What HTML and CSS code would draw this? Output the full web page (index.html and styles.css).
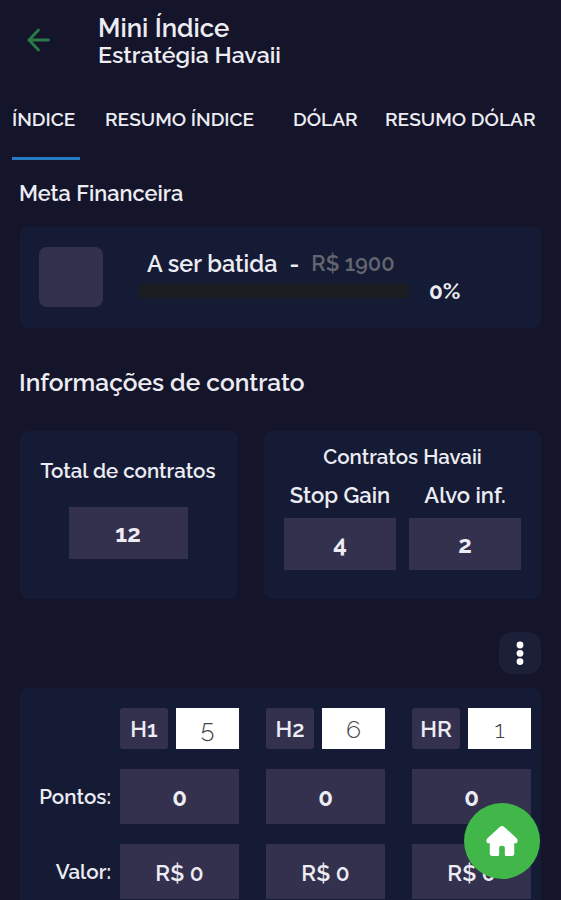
FILE: index.html
```html
<!DOCTYPE html>
<html lang="pt-BR">
<head>
<meta charset="utf-8">
<meta name="viewport" content="width=device-width, initial-scale=1">
<title>Mini Índice</title>
<link rel="stylesheet" href="styles.css">
</head>
<body>
<header class="header">
  <svg class="back" viewBox="0 0 24 24"><path d="M21.500 12H2.500M11.500 2L2 12L11.500 22"/></svg>
  <div>
    <h1 class="title">Mini Índice</h1>
    <p class="subtitle">Estratégia Havaii</p>
  </div>
</header>
<nav class="tabs">
  <a class="tab tab-active">ÍNDICE</a>
  <a class="tab">RESUMO ÍNDICE</a>
  <a class="tab">DÓLAR</a>
  <a class="tab">RESUMO DÓLAR</a>
</nav>
<main class="main">
  <h2 class="heading-goal">Meta Financeira</h2>
  <section class="card goal">
    <div class="swatch"></div>
    <div class="progress">
      <div class="goal-label"><span>A ser batida</span><span>-</span><span class="goal-value">R$ 1900</span></div>
      <div class="bar"></div>
    </div>
    <div class="percent">0%</div>
  </section>
  <h2 class="heading-info">Informações de contrato</h2>
  <div class="contracts">
    <section class="card total">
      <h3 class="label">Total de contratos</h3>
      <div class="box box-total">12</div>
    </section>
    <section class="card havaii">
      <h3 class="label">Contratos Havaii</h3>
      <div class="pair">
        <div><h4 class="label label-field">Stop Gain</h4><div class="box">4</div></div>
        <div><h4 class="label label-field">Alvo inf.</h4><div class="box">2</div></div>
      </div>
    </section>
  </div>
  <div class="toolbar">
    <button class="more" aria-label="Mais opções"><svg viewBox="0 0 8 26"><circle cx="4" cy="4" r="3.4"/><circle cx="4" cy="12.3" r="3.4"/><circle cx="4" cy="20.600" r="3.4"/></svg></button>
  </div>
  <section class="card table">
    <span></span>
    <div class="head"><div class="chip">H1</div><div class="input">5</div></div>
    <div class="head"><div class="chip">H2</div><div class="input">6</div></div>
    <div class="head"><div class="chip">HR</div><div class="input">1</div></div>
    <div class="row-label">Pontos:</div>
    <div class="cell">0</div>
    <div class="cell">0</div>
    <div class="cell">0</div>
    <div class="row-label">Valor:</div>
    <div class="cell cell-money">R$ 0</div>
    <div class="cell cell-money">R$ 0</div>
    <div class="cell cell-money">R$ 0</div>
  </section>
</main>
<button class="home" aria-label="Início"><svg viewBox="0 0 34 34"><path d="M14.600 2Q17 0 19.400 2L32.500 14Q34.500 16.500 33 18.500Q32 20 30 19V30Q30 33 27 33H21.500Q20 33 20 31.500V24.500Q20 22 17 22Q14 22 14 24.500V31.500Q14 33 12.500 33H7Q4 33 4 30V19Q2 20 1 18.500Q-.5 16.500 1.500 14Z"/></svg></button>
</body>
</html>
```
FILE: styles.css
```css
* { box-sizing: border-box; }
body {
  margin: 0;
  height: 900px;
  overflow: hidden;
  position: relative;
  background: #14142b;
  color: #ececf2;
  font-family: Raleway, Lato, sans-serif;
  font-weight: 600;
}
h1, h2, h3, h4, p { margin: 0; font-weight: 600; white-space: nowrap; }
button { border: 0; padding: 0; }
.header { display: flex; height: 90px; padding-left: 27px; }
.back { width: 24px; height: 24px; margin: 28px 47px 0 0; fill: none; stroke: #2b7a45; stroke-width: 2.8; stroke-linecap: round; }
.title { font-size: 25.8px; line-height: 30px; padding-top: 13px; }
.subtitle { font-size: 23.2px; line-height: 24px; }
.tabs { display: grid; grid-template-columns: 68px 163px 67px 153px; column-gap: 25px; height: 70px; padding-left: 12px; }
.tab { font-size: 19.1px; line-height: 58px; white-space: nowrap; }
.tab-active { border-bottom: 3px solid #267bc4; }
.main { padding: 0 20px; }
.heading-goal { margin-left: -1px; font-size: 21.8px; line-height: 30px; padding-top: 19px; height: 66px; }
.card { background: #151b35; border-radius: 8px; }
.goal { display: flex; height: 102px; padding: 21px 19px; }
.swatch { width: 64px; height: 60px; border-radius: 8px; background: #34314f; }
.progress { width: 269px; margin-left: 36px; }
.goal-label { display: flex; gap: 12px; padding-left: 8px; font-size: 23.4px; line-height: 34px; height: 37px; white-space: nowrap; }
.goal-value { color: #63666e; font-size: 21.8px; }
.bar { height: 14px; background: #1c1d20; border-radius: 3px; }
.percent { margin: 30px 0 0 21px; font-size: 22.5px; line-height: 28px; font-weight: 700; }
.heading-info { margin-left: -1px; font-size: 24.5px; line-height: 30px; padding-top: 40px; height: 103px; }
.contracts { display: grid; grid-template-columns: 218px 277px; gap: 26px; }
.contracts .card { height: 168px; }
.label { text-align: center; font-size: 20.5px; line-height: 26px; }
.total { display: flex; flex-direction: column; align-items: center; gap: 23px; padding: 27px 2px 0 0; }
.box { height: 52px; display: flex; align-items: center; justify-content: center; background: #34314f; font-size: 24px; font-weight: 700; }
.box-total { width: 119px; }
.havaii { padding: 13px 20px 0; }
.pair { display: grid; grid-template-columns: 112px 112px; gap: 13px; padding-top: 12px; }
.label-field { padding-bottom: 10px; font-size: 22px; }
.toolbar { display: flex; justify-content: flex-end; padding: 33px 0 14px; }
.more { width: 42px; height: 42px; border-radius: 13px; background: #1b1f38; display: flex; align-items: center; justify-content: center; }
.more svg { width: 8px; height: 26px; fill: #fff; margin-top: 1px; }
.table { display: grid; grid-template-columns: 73px 119px 119px 119px; column-gap: 27px; grid-template-rows: 41px 55px 55px; row-gap: 20px; height: 230px; padding-top: 20px; }
.head { display: flex; justify-content: space-between; }
.chip { width: 48px; height: 41px; border-radius: 3px; background: #34314f; font-size: 22.5px; line-height: 43px; text-align: center; }
.input { width: 63px; height: 41px; background: #fff; color: #444; font-weight: 300; font-size: 25px; line-height: 43px; text-align: center; }
.row-label { margin-right: -18px; text-align: right; font-size: 20.6px; line-height: 56px; }
.cell { display: flex; align-items: center; justify-content: center; background: #34314f; font-size: 24px; font-weight: 700; padding-top: 2px; }
.cell-money { font-size: 22.5px; font-weight: 600; }
.home { position: absolute; left: 464px; top: 803px; width: 76px; height: 76px; border-radius: 50%; background: #41b649; display: flex; align-items: center; justify-content: center; }
.home svg { width: 32px; height: 32px; fill: #fff; }
```
